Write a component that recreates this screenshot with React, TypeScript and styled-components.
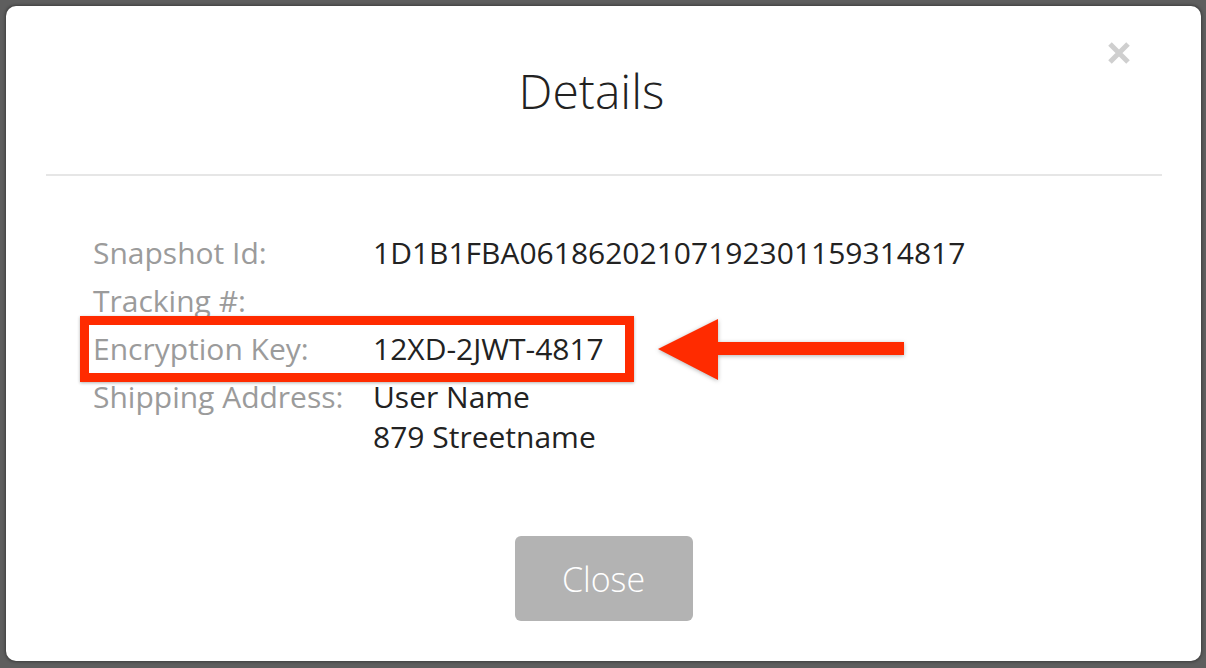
import React from "react";
import styled, { createGlobalStyle } from "styled-components";

const GlobalStyle = createGlobalStyle`
  html, body {
    margin: 0;
    padding: 0;
    background: #5e5e5e;
  }
  body {
    font-family: "Open Sans", "Liberation Sans", sans-serif;
  }
`;

const Backdrop = styled.div`
  width: 1206px;
  height: 668px;
  box-sizing: border-box;
  padding: 6px 5px 7px 6px;
  background: #5e5e5e;
`;

const Modal = styled.div`
  position: relative;
  height: 100%;
  background: #fff;
  border-radius: 10px;
  box-shadow: 0 0 3px 1px rgba(0, 0, 0, 0.35);
  display: flex;
  flex-direction: column;
  padding-bottom: 40px;
  box-sizing: border-box;
`;

const Header = styled.div`
  margin: 0 39px 0 40px;
  padding: 52px 25px 51px 0;
  border-bottom: 2px solid #e6e6e6;
  text-align: center;
`;

const Title = styled.h1`
  margin: 0;
  font-size: 48px;
  line-height: 65px;
  font-weight: 300;
  color: #222;
`;

const CloseX = styled.button`
  position: absolute;
  top: 34px;
  right: 69px;
  width: 26px;
  height: 26px;
  padding: 0;
  border: none;
  background: transparent;
  cursor: pointer;
  svg {
    display: block;
  }
`;

const Body = styled.div`
  padding: 57px 0 0 87px;
  display: flex;
  flex-direction: column;
  gap: 8px;
  font-size: 30px;
  line-height: 40px;
`;

const Row = styled.div`
  position: relative;
  display: grid;
  grid-template-columns: 280px auto;
`;

const Label = styled.div`
  color: #9b9b9b;
`;

const Value = styled.div`
  color: #222;
`;

const Highlight = styled.div`
  position: absolute;
  left: -13px;
  top: -13px;
  width: 554px;
  height: 66px;
  box-sizing: border-box;
  border: 9px solid #ff2b00;
  box-shadow: 0 1px 3px rgba(0, 0, 0, 0.3);
  pointer-events: none;
`;

const Arrow = styled.svg`
  position: absolute;
  left: 565px;
  top: -10px;
  overflow: visible;
  filter: drop-shadow(0 1px 2px rgba(0, 0, 0, 0.3));
`;

const Footer = styled.div`
  margin-top: auto;
  display: flex;
  justify-content: center;
`;

const Button = styled.button`
  width: 178px;
  height: 85px;
  border: none;
  border-radius: 6px;
  background: #b3b3b3;
  color: #fff;
  font-family: "Open Sans", "Liberation Sans", sans-serif;
  font-weight: 300;
  font-size: 34px;
  cursor: pointer;
`;

const rows: { label: string; value: React.ReactNode; marked?: boolean }[] = [
  { label: "Snapshot Id:", value: "1D1B1FBA06186202107192301159314817" },
  { label: "Tracking #:", value: "" },
  { label: "Encryption Key:", value: "12XD-2JWT-4817", marked: true },
  {
    label: "Shipping Address:",
    value: (
      <>
        User Name
        <br />
        879 Streetname
      </>
    ),
  },
];

const App = () => {
  return (
    <>
      <GlobalStyle />
      <Backdrop>
        <Modal>
          <CloseX aria-label="close">
            <svg width="26" height="26" viewBox="0 0 26 26">
              <path
                d="M4 4 L22 22 M22 4 L4 22"
                stroke="#cfcfcf"
                strokeWidth="5"
                strokeLinecap="butt"
              />
            </svg>
          </CloseX>
          <Header>
            <Title>Details</Title>
          </Header>
          <Body>
            {rows.map((r) => (
              <Row key={r.label}>
                <Label>{r.label}</Label>
                <Value>{r.value}</Value>
                {r.marked && (
                  <>
                    <Highlight />
                    <Arrow width="250" height="62" viewBox="0 0 250 62">
                      <polygon
                        points="0,30 60,0 60,23 246,23 246,36 60,36 60,61"
                        fill="#ff2b00"
                      />
                    </Arrow>
                  </>
                )}
              </Row>
            ))}
          </Body>
          <Footer>
            <Button>Close</Button>
          </Footer>
        </Modal>
      </Backdrop>
    </>
  );
};

export default App;
